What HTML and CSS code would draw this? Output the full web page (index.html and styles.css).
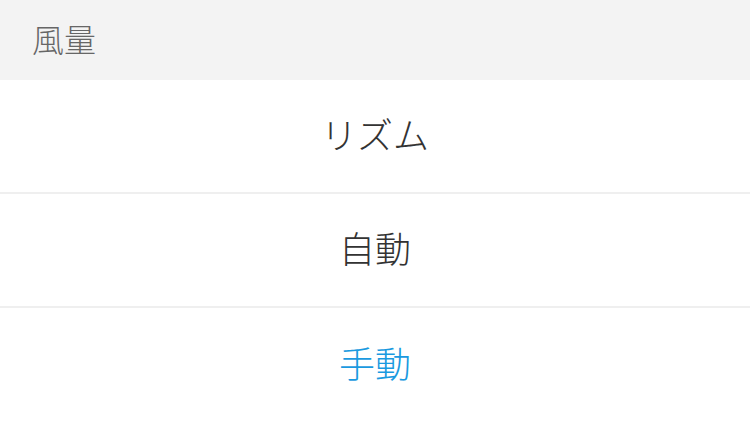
FILE: index.html
```html
<!DOCTYPE html>
<html lang="ja">
<head>
<meta charset="utf-8">
<link rel="stylesheet" href="styles.css">
</head>
<body>
<div class="sheet">
  <div class="header">風量</div>
  <div class="option">リズム</div>
  <div class="option">自動</div>
  <div class="option selected">手動</div>
</div>
</body>
</html>
```
FILE: styles.css
```css
html, body {
  margin: 0;
  padding: 0;
  background: #ffffff;
}
body {
  font-family: "Noto Sans CJK JP", "Noto Sans", sans-serif;
}
.sheet {
  display: flex;
  flex-direction: column;
  width: 750px;
}
.header {
  height: 80px;
  box-sizing: border-box;
  background: #f3f3f3;
  color: #666666;
  font-size: 32px;
  font-weight: 300;
  padding-left: 32px;
  padding-bottom: 4px;
  display: flex;
  align-items: center;
}
.option {
  height: 114px;
  box-sizing: border-box;
  border-bottom: 2px solid #efefef;
  padding-bottom: 6px;
  display: flex;
  align-items: center;
  justify-content: center;
  font-size: 36px;
  font-weight: 300;
  color: #333333;
}
.option.selected {
  color: #1a9ae0;
  border-bottom: none;
}
```
